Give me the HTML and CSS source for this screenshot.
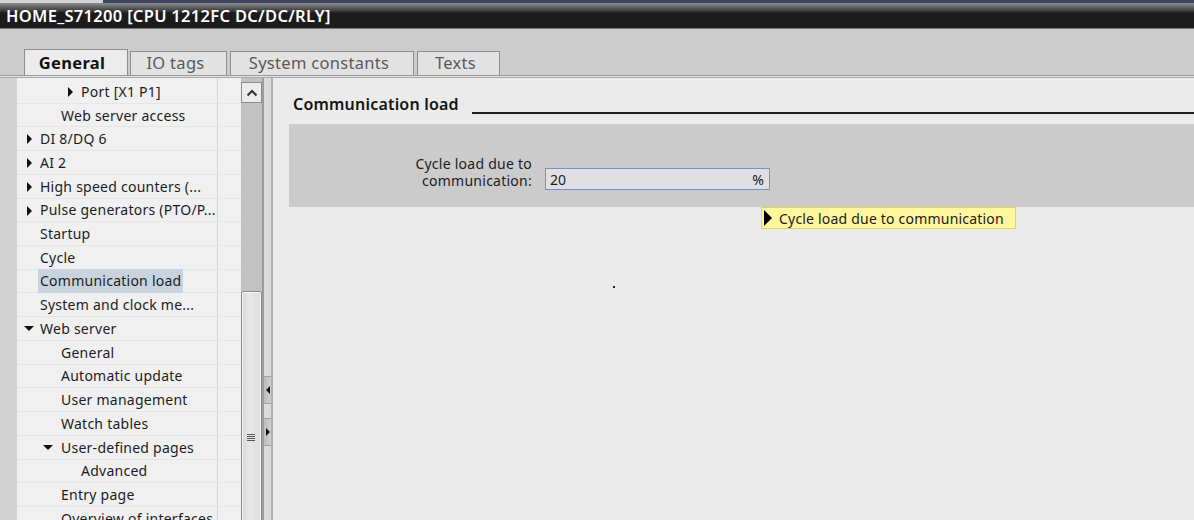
FILE: index.html
```html
<!DOCTYPE html>
<html lang="en">
<head>
    <meta charset="UTF-8">
    <meta name="viewport" content="width=device-width, initial-scale=1.0">
    <title>HOME_S71200 - Communication load</title>
    <link rel="stylesheet" href="styles.css">
</head>
<body>
    <div class="topstrip">
        <div class="topstrip-left"></div>
        <div class="topstrip-right"></div>
    </div>
    <div class="titlebar">HOME_S71200 [CPU 1212FC DC/DC/RLY]</div>
    <div class="tabbar">
        <div class="tab active">General</div>
        <div class="tab tab-io">IO tags</div>
        <div class="tab tab-sys">System constants</div>
        <div class="tab tab-txt">Texts</div>
    </div>
    <div class="sep"></div>
    <div class="main">
        <div class="gutter"></div>
        <div class="tree">
            <div class="row lvl2"><span class="arr right"></span>Port [X1 P1]</div>
            <div class="row lvl1">Web server access</div>
            <div class="row lvl0"><span class="arr right"></span>DI 8/DQ 6</div>
            <div class="row lvl0"><span class="arr right"></span>AI 2</div>
            <div class="row lvl0"><span class="arr right"></span>High speed counters (...</div>
            <div class="row lvl0"><span class="arr right"></span>Pulse generators (PTO/P...</div>
            <div class="row lvl0">Startup</div>
            <div class="row lvl0">Cycle</div>
            <div class="row lvl0"><span class="sel">Communication load</span></div>
            <div class="row lvl0">System and clock me...</div>
            <div class="row lvl0"><span class="arr down"></span>Web server</div>
            <div class="row lvl1">General</div>
            <div class="row lvl1">Automatic update</div>
            <div class="row lvl1">User management</div>
            <div class="row lvl1">Watch tables</div>
            <div class="row lvl1"><span class="arr down"></span>User-defined pages</div>
            <div class="row lvl2">Advanced</div>
            <div class="row lvl1">Entry page</div>
            <div class="row lvl1">Overview of interfaces</div>
        </div>
        <div class="scrollbar">
            <div class="sb-up">
                <svg width="12" height="8" viewBox="0 0 12 8"><path d="M1.5 6.5 L6 2 L10.5 6.5" fill="none" stroke="#333" stroke-width="2"/></svg>
            </div>
            <div class="sb-thumb"><span class="grip"></span></div>
        </div>
        <div class="splitter">
            <div class="sp-btn sp-left"><span class="tri-l"></span></div>
            <div class="sp-btn sp-right"><span class="tri-r"></span></div>
        </div>
        <div class="content">
            <div class="heading">
                <span class="heading-text">Communication load</span>
                <span class="heading-line"></span>
            </div>
            <div class="panel">
                <div class="form-row">
                    <div class="label">Cycle load due to<br>communication:</div>
                    <div class="field"><span>20</span><span>%</span></div>
                </div>
            </div>
            <div class="tooltip"><span class="tip-arr"></span>Cycle load due to communication</div>
            <span class="cursor-dot"></span>
        </div>
    </div>
</body>
</html>
```

FILE: styles.css
```css
* {
    margin: 0;
    padding: 0;
    box-sizing: border-box;
}

body {
    width: 1194px;
    height: 520px;
    overflow: hidden;
    background-color: #cccccc;
    font-family: "Noto Sans", "DejaVu Sans", sans-serif;
    color: #1c1c24;
}

.topstrip {
    display: flex;
    height: 3px;
}

.topstrip-left {
    width: 103px;
    background-color: #d4d4d4;
}

.topstrip-right {
    flex: 1;
    background-color: #3b4463;
}

.titlebar {
    height: 26px;
    background: linear-gradient(#8c8c8c 0, #3a3a3a 8px, #1c1c1c 10px, #1c1c1c);
    border-bottom: 1px solid #7a7a7a;
    color: #ffffff;
    font-size: 16.5px;
    font-weight: 600;
    line-height: 25px;
    padding-left: 6px;
    letter-spacing: 0.3px;
}

.tabbar {
    display: flex;
    align-items: flex-end;
    height: 46px;
    padding-left: 24px;
    background-color: #cccccc;
}

.tab {
    height: 24px;
    margin-right: 3px;
    border: 1px solid #8e8e8e;
    border-bottom: none;
    background-color: #e2e2e2;
    color: #5a5a5a;
    font-size: 16.5px;
    line-height: 22px;
    text-align: center;
    letter-spacing: 0.3px;
    padding-right: 6px;
}

.tab.active {
    width: 104px;
    height: 26px;
    margin-right: 2px;
    background-color: #ececec;
    color: #111111;
    font-weight: 700;
    line-height: 25px;
    padding-right: 8px;
}

.tab-io {
    width: 97px;
}

.tab-sys {
    width: 184px;
}

.tab-txt {
    width: 83px;
}

.sep {
    height: 3px;
    border-top: 1px solid #9a9a9a;
    border-bottom: 1px solid #a8a8a8;
    background-color: #e4e4e4;
}

.main {
    display: flex;
    height: 442px;
}

.gutter {
    width: 17px;
    background-color: #d2d2d2;
}

.tree {
    width: 224px;
    padding-top: 2px;
    background-color: #f0f0f0;
    background-image: linear-gradient(90deg, transparent 200px, #d6d6d6 200px, #d6d6d6 201px, transparent 201px);
    font-size: 14px;
    letter-spacing: 0.25px;
    overflow: hidden;
}

.row {
    height: 23.72px;
    border-bottom: 1px solid #e6e6e6;
    display: flex;
    align-items: center;
    white-space: nowrap;
    position: relative;
}

.lvl0 {
    padding-left: 23px;
}

.lvl1 {
    padding-left: 44px;
}

.lvl2 {
    padding-left: 64px;
}

.arr {
    position: absolute;
    top: 7px;
    width: 0;
    height: 0;
}

.arr.right {
    border-left: 5px solid #111;
    border-top: 5px solid transparent;
    border-bottom: 5px solid transparent;
}

.arr.down {
    top: 9px;
    border-top: 5px solid #111;
    border-left: 5px solid transparent;
    border-right: 5px solid transparent;
}

.lvl0 .arr.right {
    left: 10px;
}

.lvl2 .arr.right {
    left: 51px;
}

.lvl0 .arr.down {
    left: 7px;
}

.lvl1 .arr.down {
    left: 26px;
}

.sel {
    background-color: #c8d3de;
    padding: 2px 2px 3px;
    margin-left: -2px;
}

.scrollbar {
    width: 23px;
    position: relative;
    background-color: #c2c2c2;
    border-right: 2px solid #9c9c9c;
}

.sb-up {
    height: 21px;
    margin-top: 4px;
    background-color: #ececec;
    border: 1px solid #8c8c8c;
    display: flex;
    align-items: center;
    justify-content: center;
}

.sb-thumb {
    position: absolute;
    left: 0;
    right: 0;
    top: 213px;
    bottom: -10px;
    border: 1px solid #8a8a8a;
    border-radius: 2px;
    background: linear-gradient(90deg, #d8d8d8, #e8e8e8 40%, #dcdcdc);
    box-shadow: inset 0 0 0 1px #f4f4f4;
}

.grip {
    position: absolute;
    left: 5px;
    top: 142px;
    width: 8px;
    height: 7px;
    background: repeating-linear-gradient(#555 0, #555 1px, transparent 1px, transparent 2px);
}

.splitter {
    width: 9px;
    background-color: #dcdcdc;
    border-right: 2px solid #b0b0b0;
    position: relative;
}

.sp-btn {
    position: absolute;
    left: 0;
    width: 7px;
    height: 28px;
    background: linear-gradient(90deg, #bdbdbd, #d0d0d0);
    border-top: 1px solid #a0a0a0;
    border-bottom: 1px solid #a0a0a0;
    display: flex;
    align-items: center;
    justify-content: center;
}

.sp-left {
    top: 298px;
}

.sp-right {
    top: 340px;
}

.tri-l {
    border-right: 4px solid #111;
    border-top: 4px solid transparent;
    border-bottom: 4px solid transparent;
}

.tri-r {
    border-left: 4px solid #111;
    border-top: 4px solid transparent;
    border-bottom: 4px solid transparent;
}

.content {
    flex: 1;
    position: relative;
    background-color: #ebebeb;
    padding-left: 16px;
}

.heading {
    display: flex;
    align-items: flex-end;
    height: 36px;
    padding-left: 4px;
}

.heading-text {
    font-size: 16px;
    font-weight: 600;
    color: #141414;
    line-height: 22px;
    margin-bottom: -1px;
    letter-spacing: 0.2px;
}

.heading-line {
    flex: 1;
    height: 2px;
    margin-left: 13px;
    background-color: #1e1e1e;
}

.panel {
    margin-top: 10px;
    height: 83px;
    background-color: #cbcbcb;
    padding-top: 31px;
}

.form-row {
    display: flex;
    align-items: flex-end;
}

.label {
    width: 243px;
    text-align: right;
    font-size: 14px;
    line-height: 17px;
    margin-bottom: 1px;
    letter-spacing: 0.25px;
}

.field {
    width: 225px;
    height: 22px;
    margin-left: 13px;
    background-color: #e0e0e0;
    border: 1px solid #6f93d8;
    display: flex;
    justify-content: space-between;
    align-items: center;
    padding: 0 5px 0 4px;
    font-size: 14px;
}

.tooltip {
    margin-left: 472px;
    width: 255px;
    height: 22px;
    background-color: #fff69e;
    border: 1px solid #e2d35a;
    display: flex;
    align-items: center;
    font-size: 14px;
    color: #1a1a1a;
    letter-spacing: 0.2px;
}

.tip-arr {
    border-left: 8px solid #000;
    border-top: 8px solid transparent;
    border-bottom: 8px solid transparent;
    margin-left: 2px;
    margin-right: 7px;
}

.cursor-dot {
    position: absolute;
    left: 340px;
    top: 208px;
    width: 2px;
    height: 2px;
    background-color: #222;
}
```
